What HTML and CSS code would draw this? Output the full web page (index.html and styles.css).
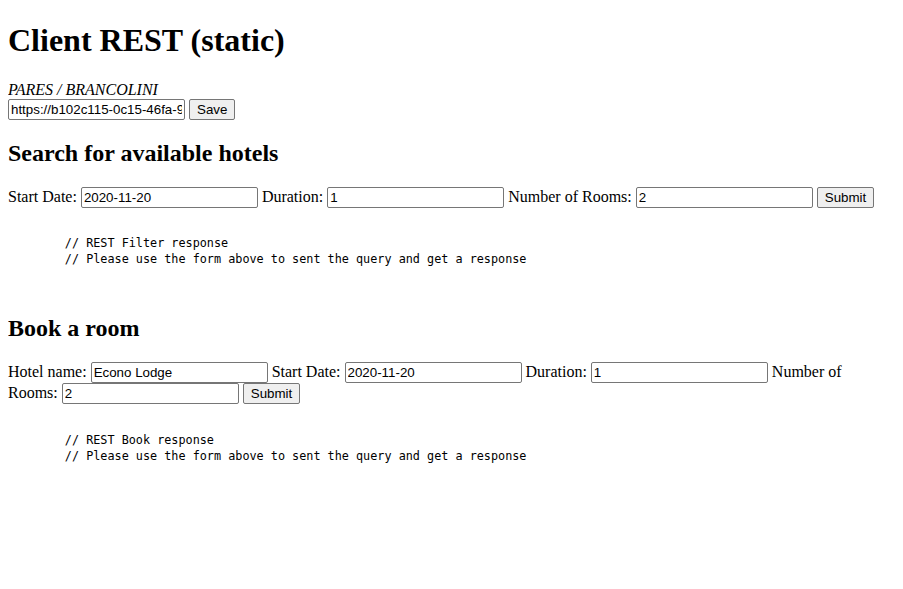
FILE: index.html
```html
<!DOCTYPE html>
<html>
<head>
<meta charset="utf-8">
<title>Client REST (static)</title>
<link rel="stylesheet" href="styles.css">
</head>
<body>
<h1 class="title">Client REST (static)</h1>
<div class="authors"><em>PARES / BRANCOLINI</em></div>
<div class="line"><input class="field" type="text" value="https://b102c115-0c15-46fa-9a2b-service.example"> <button class="btn">Save</button></div>

<h2 class="section">Search for available hotels</h2>
<form class="line">Start Date: <input class="field" type="text" value="2020-11-20"> Duration: <input class="field" type="text" value="1"> Number of Rooms: <input class="field" type="text" value="2"> <button class="btn" type="button">Submit</button></form>
<pre class="response">        // REST Filter response
        // Please use the form above to sent the query and get a response</pre>

<h2 class="section">Book a room</h2>
<form class="line">Hotel name: <input class="field" type="text" value="Econo Lodge"> Start Date: <input class="field" type="text" value="2020-11-20"> Duration: <input class="field" type="text" value="1"> Number of Rooms: <input class="field" type="text" value="2"> <button class="btn" type="button">Submit</button></form>
<pre class="response">        // REST Book response
        // Please use the form above to sent the query and get a response</pre>
</body>
</html>
```
FILE: styles.css
```css
html {
  background: #ffffff;
}
body {
  margin: 8px;
  font-family: "Liberation Serif", "Times New Roman", serif;
  font-size: 16px;
  color: #000000;
}
.title {
  font-size: 32px;
  font-weight: bold;
  margin: 14.44px 0 21.44px;
}
.section {
  font-size: 24px;
  font-weight: bold;
  margin: 19.92px 0;
}
.line {
  margin: 0;
}
.field {
  box-sizing: border-box;
  width: 177px;
  height: 21px;
  padding: 1px 2px;
  border: 1px solid #767676;
  border-radius: 2px;
  font-family: "Liberation Sans", Arial, sans-serif;
  font-size: 13.33px;
  color: #000000;
  background: #ffffff;
  margin: 0;
}
.btn {
  box-sizing: border-box;
  height: 21px;
  padding: 1px 7px;
  border: 1px solid #767676;
  border-radius: 2px;
  background: #efefef;
  font-family: "Liberation Sans", Arial, sans-serif;
  font-size: 13.33px;
  color: #000000;
  margin: 0;
}
.response {
  font-family: "DejaVu Sans Mono", monospace;
  font-size: 11.8px;
  line-height: 16px;
  margin: 27.5px 0 48px;
  color: #000000;
}
```
